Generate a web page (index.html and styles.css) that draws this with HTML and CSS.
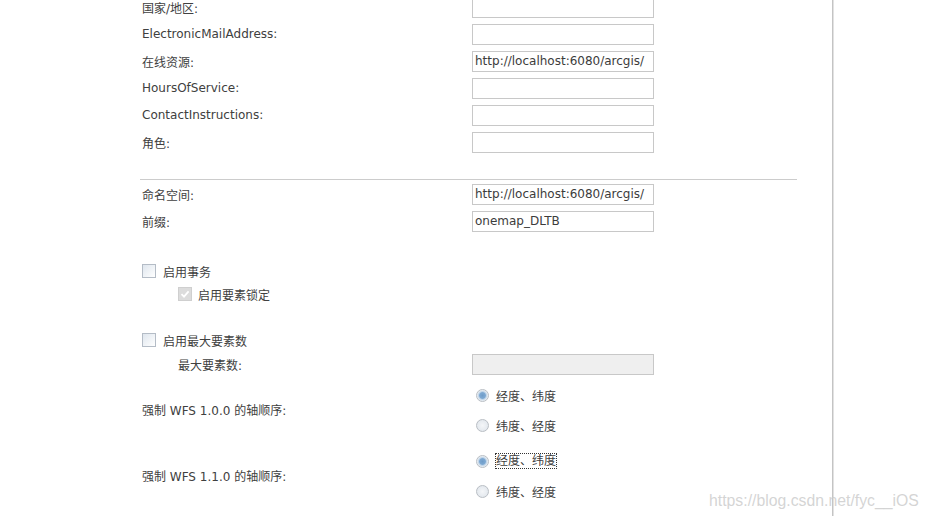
FILE: index.html
```html
<!DOCTYPE html>
<html lang="zh-CN">
<head>
<meta charset="utf-8">
<title>WFS</title>
<link rel="stylesheet" href="styles.css">
</head>
<body>
<div class="page">
  <div class="main">
    <div class="content">
      <div class="rows rows-top">
        <div class="row"><span class="label">国家/地区:</span><span class="input"></span></div>
        <div class="row"><span class="label">ElectronicMailAddress:</span><span class="input"></span></div>
        <div class="row"><span class="label">在线资源:</span><span class="input">http://localhost:6080/arcgis/</span></div>
        <div class="row"><span class="label">HoursOfService:</span><span class="input"></span></div>
        <div class="row"><span class="label">ContactInstructions:</span><span class="input"></span></div>
        <div class="row"><span class="label">角色:</span><span class="input"></span></div>
      </div>
      <div class="divider"></div>
      <div class="rows rows-ns">
        <div class="row"><span class="label">命名空间:</span><span class="input">http://localhost:6080/arcgis/</span></div>
        <div class="row"><span class="label">前缀:</span><span class="input">onemap_DLTB</span></div>
      </div>
      <div class="check-row check-tx"><span class="checkbox"></span><span>启用事务</span></div>
      <div class="check-row check-sub"><span class="checkbox disabled"><svg viewBox="0 0 14 14" width="14" height="14"><path d="M3.5 7.2 L6 9.6 L10.6 4.4" fill="none" stroke="#ffffff" stroke-width="1.8"/></svg></span><span>启用要素锁定</span></div>
      <div class="check-row check-max"><span class="checkbox"></span><span>启用最大要素数</span></div>
      <div class="row row-max"><span class="label label-sub">最大要素数:</span><span class="input input-disabled"></span></div>
      <div class="radio-row radio-row-1">
        <span class="label">强制 WFS 1.0.0 的轴顺序:</span>
        <div class="radios">
          <div class="radio-item"><span class="radio checked"></span><span>经度、纬度</span></div>
          <div class="radio-item"><span class="radio"></span><span>纬度、经度</span></div>
        </div>
      </div>
      <div class="radio-row radio-row-2">
        <span class="label">强制 WFS 1.1.0 的轴顺序:</span>
        <div class="radios">
          <div class="radio-item"><span class="radio checked"></span><span class="focused">经度、纬度</span></div>
          <div class="radio-item"><span class="radio"></span><span>纬度、经度</span></div>
        </div>
      </div>
    </div>
  </div>
  <div class="watermark">https://blog.csdn.net/fyc__iOS</div>
</div>
</body>
</html>
```
FILE: styles.css
```css
html, body {
  margin: 0;
  padding: 0;
  background: #ffffff;
}
body {
  font-family: "DejaVu Sans", "Noto Sans CJK SC", sans-serif;
  font-size: 12px;
  color: #404040;
  overflow: hidden;
}
.page {
  position: relative;
  width: 928px;
  height: 519px;
  overflow: hidden;
}
.main {
  box-sizing: content-box;
  width: 692px;
  height: 519px;
  padding-left: 140px;
  border-right: 1px solid #c4c4c4;
  box-shadow: 1px 0 0 #e2e2e2;
}
.content {
  width: 657px;
}
.rows {
  display: flex;
  flex-direction: column;
  gap: 6px;
}
.rows-top {
  margin-top: -3px;
}
.row {
  display: grid;
  grid-template-columns: 332px 182px;
  align-items: center;
  height: 21px;
}
.label {
  padding-left: 2px;
  padding-bottom: 1px;
  white-space: nowrap;
}
.input {
  display: block;
  box-sizing: border-box;
  height: 21px;
  border: 1px solid #c8c8c8;
  padding: 0 2px;
  line-height: 19px;
  color: #3c3c3c;
  white-space: nowrap;
  overflow: hidden;
  background: #ffffff;
}
.input-disabled {
  background: #efefef;
}
.divider {
  margin-top: 26px;
  height: 1px;
  background: #cccccc;
}
.rows-ns {
  margin-top: 4px;
}
.check-row {
  display: flex;
  align-items: center;
  gap: 7px;
  height: 20px;
  padding-left: 2px;
}
.check-tx {
  margin-top: 29px;
}
.check-sub {
  margin-top: 3px;
  padding-left: 38px;
  gap: 6px;
}
.check-max {
  margin-top: 26px;
}
.checkbox {
  display: block;
  box-sizing: border-box;
  width: 14px;
  height: 14px;
  border: 1px solid #b4bcc6;
  background: linear-gradient(135deg, #dfe6ee 0%, #f2f5f8 60%, #ffffff 100%);
}
.checkbox.disabled {
  border-color: #cfcfcf;
  background: #dcdcdc;
}
.checkbox svg {
  display: block;
  margin: -1px;
}
.row-max {
  margin-top: 4px;
}
.label-sub {
  padding-left: 38px;
}
.radio-row {
  display: grid;
  grid-template-columns: 332px 182px;
  align-items: center;
}
.radio-row-1 {
  margin-top: 10px;
}
.radio-row-2 {
  margin-top: 16px;
}
.radios {
  display: flex;
  flex-direction: column;
  gap: 10px;
}
.radio-item {
  display: flex;
  align-items: center;
  gap: 7px;
  height: 20px;
  padding-left: 4px;
}
.radio {
  display: block;
  box-sizing: border-box;
  width: 13px;
  height: 13px;
  border-radius: 50%;
  border: 1px solid #b9bec4;
  background: radial-gradient(circle at 50% 50%, #f4f6f8 0%, #dde3ea 100%);
}
.radio.checked {
  background: radial-gradient(circle at 50% 50%, #6f9cc8 0%, #7ea9d3 38%, #b9d0e6 48%, #eef2f6 70%, #e3e8ee 100%);
}
.focused {
  outline: 1px dotted #333333;
  outline-offset: 0;
  line-height: 14px;
}
.watermark {
  position: absolute;
  left: 709px;
  top: 492px;
  font-family: "Liberation Sans", Arial, sans-serif;
  font-size: 15.8px;
  color: rgba(205, 205, 205, 0.85);
  white-space: nowrap;
}
```
